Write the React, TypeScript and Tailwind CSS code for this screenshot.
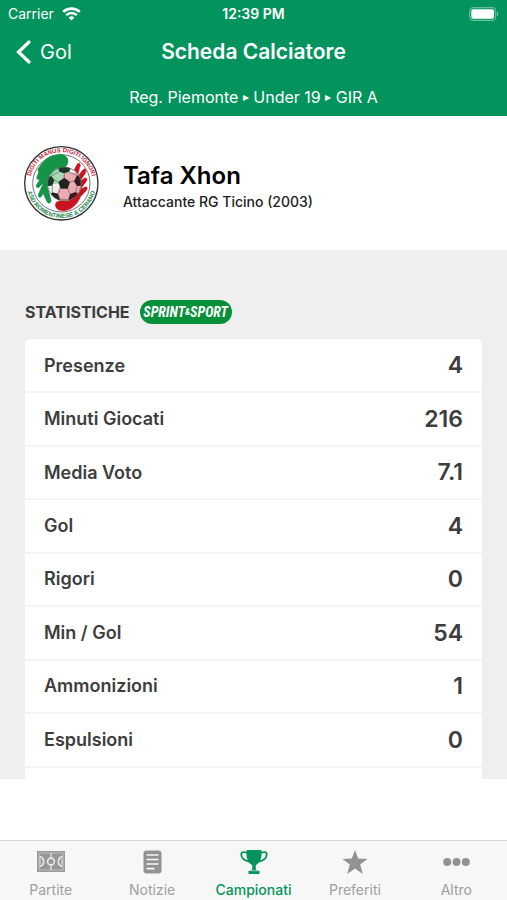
import type { ReactNode } from "react";
import clsx from "clsx";

interface Stat {
  label: string;
  value: string;
}

const stats: Stat[] = [
  { label: "Presenze", value: "4" },
  { label: "Minuti Giocati", value: "216" },
  { label: "Media Voto", value: "7.1" },
  { label: "Gol", value: "4" },
  { label: "Rigori", value: "0" },
  { label: "Min / Gol", value: "54" },
  { label: "Ammonizioni", value: "1" },
  { label: "Espulsioni", value: "0" },
];

function WifiIcon() {
  return (
    <svg className="w-[19px] h-[14px]" viewBox="0 0 19 14" fill="none" stroke="white">
      <path d="M1.2 4.9a12 12 0 0 1 16.6 0" strokeWidth="2.7" />
      <path d="M4.2 8.1a7.6 7.6 0 0 1 10.6 0" strokeWidth="2.5" />
      <path d="M9.5 13.6 6.6 10.7a4.2 4.2 0 0 1 5.8 0z" fill="white" stroke="none" />
    </svg>
  );
}

function BatteryIcon() {
  return (
    <svg className="w-[30px] h-[14px]" viewBox="0 0 30 14">
      <rect x="0.7" y="0.7" width="26" height="12.6" rx="3.6" fill="none" stroke="white" strokeOpacity="0.4" strokeWidth="1.2" />
      <rect x="2.3" y="2.3" width="22.8" height="9.4" rx="2" fill="white" />
      <path d="M28 4.8c1.6.6 1.6 3.8 0 4.4z" fill="white" fillOpacity="0.5" />
    </svg>
  );
}

function ClubCrest() {
  return (
    <svg className="w-[75px] h-[75px] shrink-0" viewBox="28 30 225 225" role="img" aria-label="RG Ticino">
      <defs>
        <path id="crest-top" d="M49 166A94 94 0 1 1 231 166" />
        <path id="crest-bottom" d="M36 142A104 104 0 0 0 244 142" />
        <clipPath id="ball">
          <circle cx="149" cy="144" r="51" />
        </clipPath>
      </defs>
      <circle cx="140" cy="142" r="110" fill="#fdfdfd" stroke="#333" strokeWidth="4" />
      <circle cx="140" cy="142" r="86" fill="white" stroke="#777" strokeWidth="3" />
      <path
        d="M70 101C84 76 102 58 128 57C151 52 164 66 158 83C154 95 144 99 133 99L108 126L101 164L109 196C106 204 99 202 96 194L86 171L80 181C75 188 69 181 73 172L88 139L72 154C66 157 63 151 67 145L94 106L76 129C69 134 65 128 68 120L78 101L73 110Z"
        fill="#159447"
        stroke="#159447"
        strokeWidth="3"
      />
      <path
        d="M177 105L188 84C194 78 200 84 195 94L187 125L205 101C212 96 217 102 212 111L194 139L209 127C217 123 219 130 214 137L197 160L213 153C219 152 219 159 214 164L198 181C187 207 169 223 145 224C128 224 119 213 124 200L152 184L184 165Z"
        fill="#c8141e"
        stroke="#c8141e"
        strokeWidth="2"
      />
      <circle cx="149" cy="144" r="51" fill="#eef1ee" />
      <g clipPath="url(#ball)">
        <path d="M98 93h51v51H98z" fill="#8fd0a4" fillOpacity="0.75" />
        <path d="M149 110h51v86H118l12-32z" fill="#e99aa1" fillOpacity="0.8" />
        <path d="M149 125l17 13-7 20h-21l-7-20z" fill="#222" />
        <path d="M129 92h41l-7 16-15 4-14-5z" fill="#1f3527" />
        <path d="M96 125l14-5 9 12-6 17-17 1z" fill="#1d3a29" />
        <path d="M187 118l17 8v23l-17 1-9-14z" fill="#331b1d" />
        <path d="M113 169l17 4 6 17-9 12-24-22z" fill="#222" />
        <path d="M183 168l-17 6-5 17 10 9 23-24z" fill="#39191b" />
        <path
          d="M149 125v-13M166 138l12-3M159 158l7 16M138 158l-8 15M131 138l-12-6M134 107l-24 13M163 108l24 10M113 149l0 20M187 150l-4 18M136 190h25"
          stroke="#646464"
          strokeWidth="2"
        />
      </g>
      <circle cx="149" cy="144" r="50" fill="none" stroke="#55605a" strokeWidth="2" />
      <g fontFamily="Liberation Sans" fontWeight="bold" fontSize="18">
        <text fill="#c32b3d">
          <textPath href="#crest-top" startOffset="50%" textAnchor="middle">
            DIGITI MANUS DIGITI IGNORI
          </textPath>
        </text>
        <text fill="#21864a">
          <textPath href="#crest-bottom" startOffset="50%" textAnchor="middle">
            ASD ROMENTINESE &amp; CERANO
          </textPath>
        </text>
      </g>
    </svg>
  );
}

function PitchIcon() {
  return (
    <svg className="w-7 h-[21px]" viewBox="0 0 28 21" fill="none">
      <rect x="0.5" y="0.5" width="27" height="20" fill="#979797" stroke="#9a9a9a" />
      <g stroke="#e8e8e8">
        <rect x="2" y="2" width="24" height="17" strokeWidth="0.5" />
        <path d="M14 2v5M14 14v5" strokeWidth="1.2" />
        <circle cx="14" cy="10.5" r="3.4" strokeWidth="1.6" />
        <path d="M2.5 5.5c5.5 1.5 5.5 8.5 0 10M25.5 5.5c-5.5 1.5-5.5 8.5 0 10" strokeWidth="1.6" />
        <path d="M3 7.5v6M25 7.5v6" strokeWidth="1" />
      </g>
    </svg>
  );
}

function NewsIcon() {
  return (
    <svg className="w-[19px] h-6" viewBox="0 0 19 24">
      <rect x="0.5" y="0.5" width="18" height="23" rx="3.2" fill="#929292" />
      <path d="M3.5 5h12M3.5 9.5h12M3.5 14h12M3.5 18.6h8" stroke="#f7f7f7" strokeWidth="1.7" />
    </svg>
  );
}

function TrophyIcon() {
  return (
    <svg className="w-7 h-6" viewBox="0 0 28 24" fill="#05945c">
      <path d="M6.5 0h15v3.5c0 6-2 9.500-5.700 11.700v3.300c0 1.500.8 2 3.700 2.500v3h-11v-3c2.900-.5 3.700-1 3.700-2.500v-3.300C8.500 13 6.500 9.500 6.500 3.500z" />
      <path
        d="M7.5 3C3.500 1.300 1.200 2 1.200 4.300c0 4.200 4.300 6.700 9.300 7.700M20.500 3c4-1.700 6.300-1 6.300 1.300 0 4.200-4.300 6.700-9.300 7.700"
        fill="none"
        stroke="#05945c"
        strokeWidth="1.8"
      />
      <path d="M9.5 20.7h9" stroke="#f7f7f7" strokeWidth="0.6" />
    </svg>
  );
}

function StarIcon() {
  return (
    <svg className="w-[26px] h-6" viewBox="0 0 26 24" fill="#929292">
      <path d="M13 0l3.2 8.600 9.300.3-7.300 5.700L20.800 24 13 18.600 5.200 24l2.600-9.400L.5 8.900l9.300-.3z" />
    </svg>
  );
}

function MoreIcon() {
  return (
    <svg className="w-[27px] h-6" viewBox="0 0 27 24" fill="#929292">
      <circle cx="4.2" cy="12" r="4" />
      <circle cx="13.5" cy="12" r="4" />
      <circle cx="22.8" cy="12" r="4" />
    </svg>
  );
}

function TabItem({ icon, label, active = false }: { icon: ReactNode; label: string; active?: boolean }) {
  return (
    <a
      href="#"
      aria-current={active ? "page" : undefined}
      className={clsx(
        "flex flex-1 flex-col items-center pt-[7px] text-sm",
        active ? "text-[#05945c] font-medium" : "text-[#a0a0a0]"
      )}
    >
      <span className="flex h-7 items-center">{icon}</span>
      <span className="mt-[5px]">{label}</span>
    </a>
  );
}

function Separator() {
  return <span className="w-[15px] text-center text-xs">▸</span>;
}

export default function App() {
  return (
    <div className="flex h-screen flex-col overflow-hidden bg-white font-[Inter,sans-serif]">
      <header className="shrink-0 bg-[#02945c] text-white">
        <div className="grid h-7 grid-cols-3 items-center px-2 text-sm">
          <div className="flex items-center gap-2">
            <span>Carrier</span>
            <WifiIcon />
          </div>
          <div className="text-center font-semibold">12:39 PM</div>
          <div className="flex justify-end">
            <BatteryIcon />
          </div>
        </div>
        <div className="grid h-12 grid-cols-[1fr_auto_1fr] items-center px-4">
          <button type="button" className="flex items-center gap-2 text-xl">
            <svg className="w-4 h-6" viewBox="0 0 16 24" fill="none" stroke="white" strokeWidth="3.2" strokeLinecap="round">
              <path d="M13 2L2.5 12 13 22" />
            </svg>
            Gol
          </button>
          <h1 className="text-[21px] font-semibold">Scheda Calciatore</h1>
        </div>
        <nav className="flex h-10 items-center justify-center pt-0.5 text-base">
          <span>Reg. Piemonte</span>
          <Separator />
          <span>Under 19</span>
          <Separator />
          <span>GIR A</span>
        </nav>
      </header>

      <section className="flex h-[134px] shrink-0 items-center gap-6 px-6 text-black">
        <ClubCrest />
        <div className="pt-2.5">
          <h2 className="text-2xl leading-7 font-semibold">Tafa Xhon</h2>
          <p className="text-sm leading-6 font-medium text-[#222]">Attaccante RG Ticino (2003)</p>
        </div>
      </section>

      <main className="min-h-0 flex-1 overflow-hidden bg-[#efefef] px-[25px] pt-[50px] text-[#3d3d3d]">
        <div className="flex items-center gap-2.5">
          <h3 className="text-base font-bold">STATISTICHE</h3>
          <span className="flex h-6 w-[92px] items-center justify-center rounded-full bg-[#05903a] font-['Liberation_Sans_Narrow','Roboto_Condensed',Roboto,sans-serif] text-sm font-bold text-white italic">
            SPRINT
            <span className="text-[9px]">&amp;</span>
            SPORT
          </span>
        </div>
        <dl className="mt-[15px] flex h-[482px] flex-col rounded-md bg-white pt-px">
          {stats.map((stat) => (
            <div
              key={stat.label}
              className="flex flex-1 items-center justify-between border-b-2 border-[#f4f4f4] px-[19px]"
            >
              <dt className="text-lg font-semibold">{stat.label}</dt>
              <dd className="text-[23px] font-semibold">{stat.value}</dd>
            </div>
          ))}
          <div className="flex-1 border-b-2 border-[#f4f4f4]" />
        </dl>
      </main>

      <footer className="shrink-0 pt-[61px]">
        <nav className="flex h-[60px] border-t border-[#d8d8d8] bg-[#f7f7f7]">
          <TabItem icon={<PitchIcon />} label="Partite" />
          <TabItem icon={<NewsIcon />} label="Notizie" />
          <TabItem icon={<TrophyIcon />} label="Campionati" active />
          <TabItem icon={<StarIcon />} label="Preferiti" />
          <TabItem icon={<MoreIcon />} label="Altro" />
        </nav>
      </footer>
    </div>
  );
}
